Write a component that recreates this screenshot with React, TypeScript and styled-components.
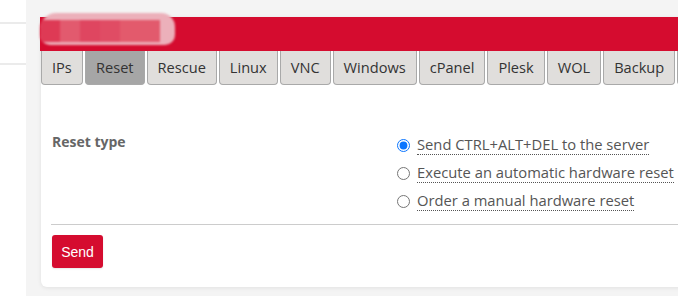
import React, { useState } from "react";
import styled, { createGlobalStyle } from "styled-components";

const GlobalStyle = createGlobalStyle`
  html, body {
    margin: 0;
    padding: 0;
    background: #f4f4f4;
    font-family: "Open Sans", "Noto Sans", sans-serif;
    overflow: hidden;
  }
`;

const tabs = ["IPs", "Reset", "Rescue", "Linux", "VNC", "Windows", "cPanel", "Plesk", "WOL", "Backup"];

const options = [
  "Send CTRL+ALT+DEL to the server",
  "Execute an automatic hardware reset",
  "Order a manual hardware reset",
];

const App = () => {
  const [active, setActive] = useState("Reset");
  const [choice, setChoice] = useState(0);

  return (
    <Page>
      <GlobalStyle />
      <Sidebar>
        <SideItem $height={22} />
        <SideItem $height={39} />
      </Sidebar>
      <Main>
        <Card>
          <Header>
            <Censored>
              <Blot $c="#de3a55" />
              <Blot $c="#e25a6e" />
              <Blot $c="#df4660" />
              <Blot $c="#e04c64" />
              <Blot $c="#e35a6c" />
              <Blot $c="#e25a6d" />
            </Censored>
          </Header>
          <TabBar>
            {tabs.map((t) => (
              <Tab key={t} $active={t === active} onClick={() => setActive(t)}>
                {t}
              </Tab>
            ))}
            {/* next tab, only its edge is visible */}
            <Tab $active={false} aria-hidden />
          </TabBar>
          <Body>
            <FormRow>
              <Label>Reset type</Label>
              <Options>
                {options.map((o, i) => (
                  <Option key={o}>
                    <Radio
                      type="radio"
                      name="reset"
                      checked={choice === i}
                      onChange={() => setChoice(i)}
                    />
                    <OptionText>{o}</OptionText>
                  </Option>
                ))}
              </Options>
            </FormRow>
            <Divider />
            <SendButton>Send</SendButton>
          </Body>
        </Card>
      </Main>
    </Page>
  );
};

export default App;

const Page = styled("div")({
  display: "flex",
  minHeight: "296px",
});

const Sidebar = styled("div")({
  width: "26px",
  flexShrink: 0,
  background: "#fff",
  display: "flex",
  flexDirection: "column",
});

const SideItem = styled("div")<{ $height: number }>`
  height: ${(p) => p.$height}px;
  border-bottom: 2px solid #ebebeb;
`;

const Main = styled("div")({
  flex: 1,
  padding: "17px 0 0 15px",
  overflow: "hidden",
});

const Card = styled("div")({
  width: "720px",
  background: "#fff",
  borderRadius: "0 0 6px 6px",
  boxShadow: "0 1px 4px rgba(0,0,0,0.08)",
  paddingBottom: "19px",
});

const Header = styled("div")({
  position: "relative",
  height: "34px",
  background: "#d50c2f",
  marginLeft: "-1px",
});

const Censored = styled("div")({
  position: "absolute",
  left: "0",
  top: "-4px",
  width: "135px",
  height: "32px",
  display: "flex",
  borderRadius: "16px 14px 10px 10px",
  overflow: "hidden",
  background: "#ecb0ba",
  filter: "blur(0.8px)",
});

const Blot = styled("div")<{ $c: string }>`
  width: 20px;
  margin-top: 7px;
  height: 22px;
  background: ${(p) => p.$c};
`;

const TabBar = styled("div")({
  display: "flex",
  gap: "2px",
  whiteSpace: "nowrap",
});

const Tab = styled("div")<{ $active: boolean }>`
  min-width: 20px;
  height: 33px;
  line-height: 33px;
  padding: 0 10px;
  font-size: 14.6px;
  color: #333;
  background: ${(p) => (p.$active ? "#a6a6a6" : "#e0dedc")};
  border: 1px solid #a9a9a9;
  border-top: none;
  border-radius: 0 0 4px 4px;
  cursor: pointer;
`;

const Body = styled("div")({
  padding: "46px 10px 0 10px",
});

const FormRow = styled("div")({
  display: "grid",
  gridTemplateColumns: "346px 1fr",
});

const Label = styled("div")({
  fontSize: "14px",
  fontWeight: 700,
  color: "#666",
  lineHeight: "20px",
  paddingTop: "1px",
  paddingLeft: "1px",
});

const Options = styled("div")({
  display: "flex",
  flexDirection: "column",
  marginBottom: "9px",
});

const Option = styled("label")({
  display: "flex",
  alignItems: "center",
  height: "28px",
  gap: "7px",
  cursor: "pointer",
});

const Radio = styled("input")({
  margin: "0",
  width: "13px",
  height: "13px",
  accentColor: "#0a75ff",
});

const OptionText = styled("span")({
  fontSize: "14.75px",
  color: "#555",
  lineHeight: "19px",
  borderBottom: "1px dotted #555",
});

const Divider = styled("div")({
  height: "1px",
  background: "#cccccc",
  marginRight: "-20px",
});

const SendButton = styled("button")({
  marginTop: "10px",
  marginLeft: "1px",
  width: "51px",
  height: "33px",
  border: "none",
  borderRadius: "3px",
  background: "#d50c2f",
  color: "#fff",
  fontFamily: '"Liberation Sans", Arial, sans-serif',
  fontSize: "14px",
  fontWeight: 500,
  boxShadow: "0 1px 2px rgba(0,0,0,0.1)",
  cursor: "pointer",
});
